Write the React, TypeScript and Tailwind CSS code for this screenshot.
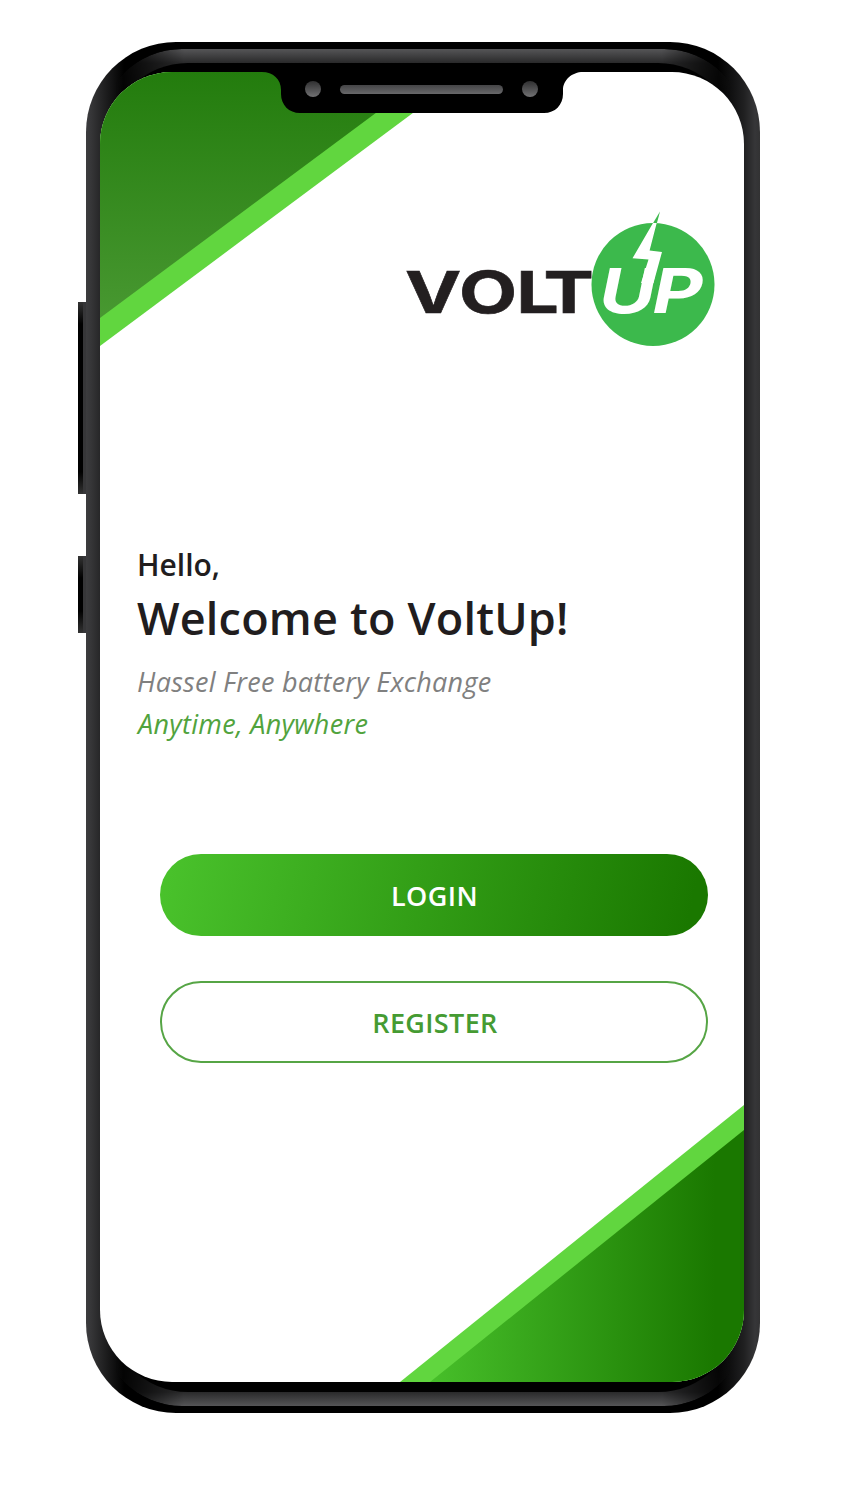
function Logo() {
  return (
    <svg className="block h-[140px] w-[314px]" viewBox="403 209 314 140" aria-label="VoltUp">
      <g fontFamily="Inter, sans-serif" fontWeight="700">
        <text transform="translate(406 312.5) scale(1.3 1)" x="-0.8 40.8 84.9 105.8" y="0" fontSize="58" fill="#231f20" stroke="#231f20" strokeWidth="0.6">VOLT</text>
        <circle cx="653" cy="284.5" r="61.5" fill="#3cb94c" />
        <path d="M660 211.5 652.8 223.5 656.8 223.5Z" fill="#3cb94c" />
        <text transform="translate(600 313) scale(1.25 1)" x="-0.8 42" y="0" fontSize="62" fontStyle="italic" fill="#fff">UP</text>
        <path d="M653 223 656.7 223 649.6 250.5 662 252 653.5 283 641 283 648.5 259.5 632.5 258.3Z" fill="#fff" />
      </g>
    </svg>
  );
}

function Notch() {
  return (
    <div className="absolute top-0 left-[162px] h-[41px] w-[321px]">
      <svg className="absolute inset-0 h-full w-full" viewBox="0 0 321 41" aria-hidden="true">
        <path d="M0 0C11 0 19 7 19 18V22C19 33 27 41 38 41H282C293 41 301 33 301 22V18C301 8 310 0 321 0Z" fill="#000" />
      </svg>
      <div className="relative flex items-center justify-between pr-[45px] pl-[43px] pt-[9px]">
        <span className="h-4 w-4 rounded-full bg-linear-to-b from-[#303031] to-[#727274]" />
        <span className="h-[9px] w-[163px] rounded-full bg-linear-to-b from-[#454547] to-[#68686a]" />
        <span className="h-4 w-4 rounded-full bg-linear-to-b from-[#303031] to-[#727274]" />
      </div>
    </div>
  );
}

function Corners() {
  return (
    <svg className="absolute inset-0 h-full w-full" viewBox="100 72 644 1310" aria-hidden="true">
      <defs>
        <linearGradient id="topShade" gradientUnits="userSpaceOnUse" x1="0" y1="72" x2="0" y2="318">
          <stop stopColor="#237c0d" />
          <stop offset="1" stopColor="#489831" />
        </linearGradient>
        <linearGradient id="bottomShade" gradientUnits="userSpaceOnUse" x1="430" y1="0" x2="715" y2="0">
          <stop stopColor="#47bf2a" />
          <stop offset="1" stopColor="#1a7800" />
        </linearGradient>
      </defs>
      <path d="M100 72H468L100 346Z" fill="#61d63f" />
      <path d="M100 72H431L100 318Z" fill="url(#topShade)" />
      <path d="M400 1382 744 1105V1382Z" fill="#61d63f" />
      <path d="M430 1382 744 1130V1382Z" fill="url(#bottomShade)" />
    </svg>
  );
}

function SideKey({ className }: { className: string }) {
  return (
    <div className={`absolute left-[78px] flex w-[9px] ${className}`}>
      <span className="w-[5px] bg-[linear-gradient(#333,#000_22px,#000_calc(100%-22px),#333)]" />
      <span className="flex-1 bg-[#363638]" />
    </div>
  );
}

export default function App() {
  return (
    <div className="relative h-[1487px] w-[860px] overflow-hidden bg-white pt-[42px] pl-[86px] font-['Open_Sans',sans-serif]">
      <SideKey className="top-[302px] h-[192px]" />
      <SideKey className="top-[556px] h-[77px]" />
      <div className="relative h-[1371px] w-[674px] rounded-[90px] bg-[linear-gradient(90deg,#3c3c3e_0,#363638_5px,#252526_15px,#000_38px,#000_calc(100%-42px),#202021_calc(100%-16px),#363638_calc(100%-5px),#323233_100%)] pt-[30px] pl-[14px]">
        <div className="absolute inset-x-[14px] inset-y-[7px] rounded-[82px] bg-[linear-gradient(#555557,#29292a_14px,#202020_35px,#000_60px,#000_calc(100%-60px),#202020_calc(100%-35px),#29292a_calc(100%-14px),#555557)] mask-[linear-gradient(90deg,transparent_16px,#000_84px,#000_calc(100%-84px),transparent_calc(100%-16px))]">
          <div className="absolute inset-x-[8px] inset-y-[14px] rounded-[80px] bg-black" />
        </div>
        <main className="relative flex h-[1310px] w-[644px] flex-col overflow-hidden rounded-[72px] bg-white">
          <Corners />
          <Notch />
          <div className="relative mt-[137px] mr-[27px] self-end">
            <Logo />
          </div>
          <section className="relative mt-[196px] flex flex-col items-start pl-[37px] whitespace-nowrap">
            <p className="h-10 text-[30px] leading-10 font-semibold text-[#211d1e]">Hello,</p>
            <h1 className="mt-[3px] h-[60px] text-[45px] leading-[60px] font-semibold tracking-[0.2px] text-[#211d1e]">Welcome to VoltUp!</h1>
            <p className="mt-[14px] h-10 text-[27px] leading-10 tracking-[0.27px] text-[#808080] italic">Hassel Free battery Exchange</p>
            <p className="mt-[2px] ml-px h-10 text-[27px] leading-10 tracking-[0.3px] text-[#51a33d] italic">Anytime, Anywhere</p>
          </section>
          <div className="relative mt-[110px] ml-[60px] flex w-[548px] flex-col gap-[45px] text-[27px] font-semibold">
            <button className="h-[82px] rounded-full bg-[linear-gradient(102deg,#4ac32c,#1a7800_96%)] pt-[2px] pl-px tracking-[0.4px] text-white">LOGIN</button>
            <button className="h-[82px] rounded-full border-2 border-[#56a545] pt-[2px] pl-[2px] tracking-[0.35px] text-[#459b32]">REGISTER</button>
          </div>
        </main>
      </div>
    </div>
  );
}
